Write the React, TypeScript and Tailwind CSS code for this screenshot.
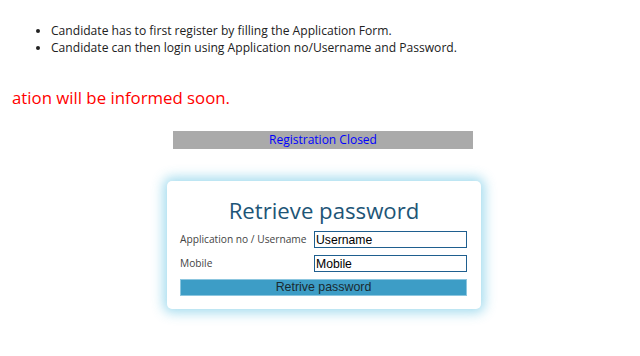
export default function App() {
  return (
    <div className="min-h-screen w-[640px] bg-white font-['Open_Sans','Liberation_Sans',sans-serif]">
      <ul className="list-disc pl-[51px] pt-[22px] text-[12.1px] leading-[17px] text-[#222]">
        <li>Candidate has to first register by filling the Application Form.</li>
        <li>Candidate can then login using Application no/Username and Password.</li>
      </ul>

      <div className="mt-[30px] pl-[12px] text-[16.8px] leading-[24px] text-[#ff0000]">
        ation will be informed soon.
      </div>

      <div className="ml-[173px] mt-[21px] h-[18px] w-[300px] bg-[#aaaaaa] text-center text-[12px] font-medium leading-[18px] text-[#0000ff]">
        Registration Closed
      </div>

      <div className="ml-[167px] mt-[32px] w-[314px] rounded-[5px] bg-white px-[13px] pb-[13px] pt-[14px] shadow-[0_0_12px_4px_rgba(60,180,220,0.45)]">
        <h2 className="text-center text-[22.2px] leading-[32px] text-[#1d5577]">Retrieve password</h2>
        <div className="mt-[4px] flex items-center">
          <label className="w-[134px] whitespace-nowrap text-[10.2px] text-[#444]">Application no / Username</label>
          <input
            className="h-[17px] w-[153px] border border-[#1f5f8f] px-[1px] font-['Liberation_Sans',Arial,sans-serif] text-[12.2px] leading-[15px] text-black outline-none placeholder:text-black"
            placeholder="Username"
          />
        </div>
        <div className="mt-[7px] flex items-center">
          <label className="w-[134px] text-[10.2px] text-[#444]">Mobile</label>
          <input
            className="h-[17px] w-[153px] border border-[#1f5f8f] px-[1px] font-['Liberation_Sans',Arial,sans-serif] text-[12.2px] leading-[15px] text-black outline-none placeholder:text-black"
            placeholder="Mobile"
          />
        </div>
        <button className="mt-[7px] block h-[17px] w-[287px] border border-[#8cc6df] bg-[#3d9dc6] text-center font-['Liberation_Sans',Arial,sans-serif] text-[12.4px] leading-[15px] text-[#1a2a30]">
          Retrive password
        </button>
      </div>
    </div>
  );
}
